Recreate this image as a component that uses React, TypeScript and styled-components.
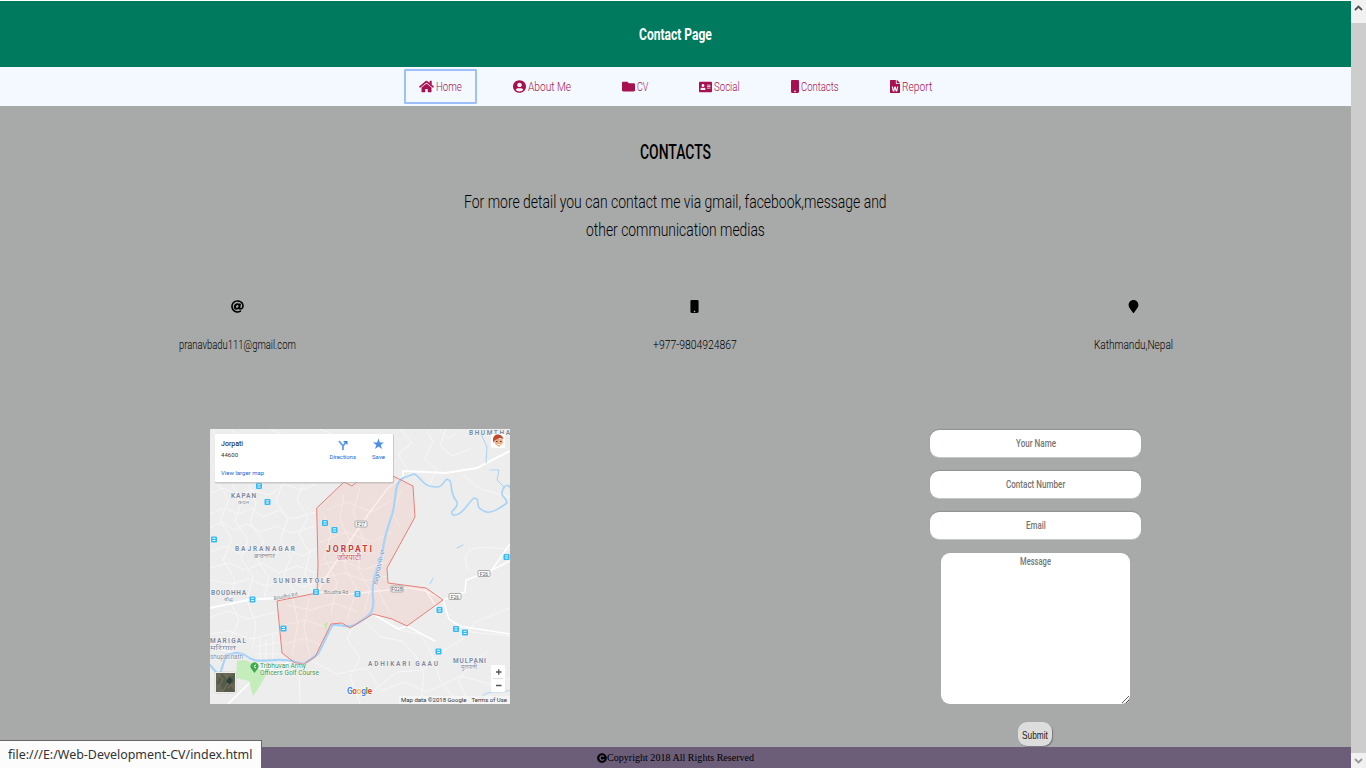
import React, { useLayoutEffect, useRef, useState } from 'react';
import styled, { createGlobalStyle } from 'styled-components';
import { FaHome, FaUserCircle, FaFolder, FaAddressCard, FaMobile, FaFileWord, FaAt, FaMapMarker, FaCopyright } from 'react-icons/fa';

const GlobalStyle = createGlobalStyle`
  * { box-sizing: border-box; }
  body { margin: 0; overflow: hidden; font-family: Roboto, "Liberation Sans", sans-serif; }
`;

const Screen = styled.div`
  display: flex;
  width: 1366px;
  height: 768px;
  overflow: hidden;
`;
const Page = styled.div`
  display: flex;
  flex-direction: column;
  width: 1351px;
  border-top: 1px solid #fff;
  background: #a8aaa9;
`;
const Header = styled.header`
  height: 66px;
  display: flex;
  align-items: center;
  justify-content: center;
  background: #007a5e;
  color: #fff;
  padding-top: 2px;
`;
const Nav = styled.nav`
  height: 39px;
  display: flex;
  align-items: center;
  justify-content: center;
  gap: 21px;
  background: #f4f8ff;
`;
const NavLink = styled.a<{ $focused?: boolean }>`
  display: flex;
  align-items: center;
  gap: 2px;
  height: 35px;
  padding: 0 15px;
  color: #a8114f;
  border-radius: 1px;
  outline: ${(p) => (p.$focused ? '2px solid #9dc0fc' : 'none')};
  outline-offset: -2px;
  svg { display: block; }
`;
const Main = styled.main`
  height: 641px;
  display: flex;
  flex-direction: column;
  align-items: center;
  color: #000;
`;
const Title = styled.h2`
  margin: 34px 0 0;
  height: 24px;
  line-height: 24px;
  font-size: 20px;
`;
const Intro = styled.div`
  display: flex;
  flex-direction: column;
  align-items: center;
  margin-top: 24px;
`;
const Details = styled.section`
  width: 100%;
  display: flex;
  justify-content: space-around;
  margin-top: 56px;
`;
const Detail = styled.div`
  display: flex;
  flex-direction: column;
  align-items: center;
  gap: 23px;
  svg { display: block; }
`;
const Lower = styled.section`
  width: 100%;
  display: flex;
  justify-content: space-around;
  margin-top: 75px;
`;
const Form = styled.form`
  width: 211px;
  padding-top: 1px;
  display: flex;
  flex-direction: column;
  align-items: center;
  gap: 14px;
`;
const Field = styled.div`
  width: 211px;
  height: 27px;
  padding-bottom: 1px;
  display: flex;
  align-items: center;
  justify-content: center;
  background: #fff;
  border-radius: 9px;
  box-shadow: 0 -1px 1px #8f9190, 0 1px 0 #c5c7c6;
  color: #757575;
`;
const MessageBox = styled.div`
  width: 189px;
  height: 151px;
  display: flex;
  justify-content: center;
  align-items: flex-start;
  background: #fff;
  border-radius: 9px;
  color: #757575;
  resize: both;
  overflow: hidden;
`;
const Submit = styled.button`
  width: 34px;
  height: 24px;
  margin: 4px 1px 0 0;
  padding: 2px 0 0;
  border: 0;
  border-radius: 9px;
  background: #ddd;
  box-shadow: 1px 1px 1px #777;
  color: #222;
  display: flex;
  align-items: center;
  justify-content: center;
`;
const Footer = styled.footer`
  height: 21px;
  display: flex;
  align-items: center;
  justify-content: center;
  background: #6c5e78;
  color: #000;
  font-family: "Liberation Serif", serif;
`;
const StatusBar = styled.div`
  position: absolute;
  left: 0;
  top: 740px;
  width: 262px;
  height: 28px;
  padding-left: 8px;
  background: #fcfcfc;
  border-top: 1px solid #666;
  border-right: 1px solid #666;
  color: #333;
  font-family: "Noto Sans", sans-serif;
`;
const Scrollbar = styled.div`
  width: 15px;
  height: 768px;
  display: flex;
  flex-direction: column;
  background: #f1f1f1;
`;
const ScrollButton = styled.div<{ $height: number; $lift?: number }>`
  height: ${(p) => p.$height}px;
  padding-bottom: ${(p) => p.$lift ?? 0}px;
  display: flex;
  align-items: center;
  justify-content: center;
`;
const Thumb = styled.div`
  flex: 1;
  background: #cdcdcd;
`;
const MapFrame = styled.svg`
  width: 300px;
  height: 275px;
  display: block;
  font-family: Roboto, "Noto Sans", sans-serif;
`;

const FitBox = styled.span<{ $width: number; $line: number }>`
  display: inline-flex;
  width: ${(p) => p.$width}px;
  height: ${(p) => p.$line}px;
  line-height: ${(p) => p.$line}px;
  text-align: left;
`;
const FitText = styled.span<{ $size: number; $weight: number }>`
  flex: none;
  white-space: nowrap;
  transform-origin: 0 50%;
  font-size: ${(p) => p.$size}px;
  font-weight: ${(p) => p.$weight};
`;

type CondensedProps = { width: number; size: number; weight?: number; line?: number; children: string };

/* Narrows the lettering so that a line fills exactly the given width. */
function Condensed({ width, size, weight = 300, line = 18, children }: CondensedProps) {
  const ref = useRef<HTMLSpanElement>(null);
  const [scale, setScale] = useState(1);
  useLayoutEffect(() => {
    if (ref.current) setScale(width / ref.current.offsetWidth);
  }, [width, size, children]);
  return (
    <FitBox $width={width} $line={line}>
      <FitText ref={ref} $size={size} $weight={weight} style={{ transform: `scaleX(${scale})` }}>{children}</FitText>
    </FitBox>
  );
}

const links = [
  { label: 'Home', width: 26, icon: FaHome, w: 15, h: 13 },
  { label: 'About Me', width: 43, icon: FaUserCircle, w: 13, h: 13 },
  { label: 'CV', width: 11, icon: FaFolder, w: 13, h: 13 },
  { label: 'Social', width: 26, icon: FaAddressCard, w: 13, h: 12 },
  { label: 'Contacts', width: 38, icon: FaMobile, w: 8, h: 13 },
  { label: 'Report', width: 30, icon: FaFileWord, w: 10, h: 13 },
];

const stops = [[259, 486], [267.5, 502], [214, 539.5], [325, 523], [334.5, 530], [316, 592], [252.5, 599.5], [283.5, 628.5], [357.5, 594], [506.5, 557], [439.5, 610], [456, 629], [465, 632.5], [438.5, 651.5]];

const boundary = 'M316.7 508L344 482L352 486L364 476H393L413 486L415 517L387 568L388 583L426 588L443 600L407 626L392 619L373 614L360 622L350 628L342 623L331 624L315 657L304 664L295 663L282 653L277 601L317 593L318 565Z';

type LabelProps = { x: number; y: number; w: number; size?: number; color?: string; weight?: number; children: string };
const Label = ({ x, y, w, size = 6.5, color = '#7c8ba1', weight = 700, children }: LabelProps) => (
  <text x={x} y={y} textLength={w} lengthAdjust={weight === 400 ? 'spacingAndGlyphs' : 'spacing'} fontSize={size} fill={color} fontWeight={weight} stroke="#fff" strokeWidth=".6" paintOrder="stroke">{children}</text>
);

function MapView() {
  return (
    <MapFrame viewBox="210 429 300 275">
      <rect x="210" y="429" width="300" height="275" fill="#eeeded" />
      <g fill="none" stroke="#f9f9f9" strokeWidth=".8">
        <path d="M210 493L224 488L237 496L251 490L270 495L284 484L301 490L316 484M210 514L224 508L239 514L252 508L263 517L279 510L292 519L316 512M210 528L222 522L233 530L247 524L261 532L277 526L291 533L316 526M210 552L226 546L240 554L257 547L271 556L286 549L302 556L317 548M210 568L229 563L246 570L262 563L279 573L297 566L317 573M210 580L232 584L249 579L267 586L285 579L303 587L317 582" />
        <path d="M218 484L229 500L220 520L232 540L223 560L235 580L230 601L239 620L230 640M233 484L241 503L235 521L248 540L241 558L253 577L247 600L256 625L252 650M249 484L256 503L250 523L263 541L257 560L269 577L264 599M282 484L276 502L288 519L280 540L291 557L284 575L296 595M303 484L297 500L308 517L299 535L310 553L305 574L313 592" />
        <path d="M210 617L229 611L247 619L277 612M210 634L229 631L251 639L279 632M255 647L280 642M257 654H279M260 636V662M266 640V662M273 633V660M210 648L232 652L251 666L276 671L299 666M299 666L300 704M312 661L337 674L366 668L382 691L404 682L427 692L461 676L490 684L510 678M365 622L381 637L402 641L416 656L424 674L421 704M354 625L347 639L360 658L350 677L360 704M389 620L400 630L420 634L431 652L440 680L459 704M374 690L397 672L424 670L444 650L463 639L475 622L510 608M451 620L471 632L510 636M490 650L469 665L459 681L469 704" />
        <path d="M400 429L412 443L398 454L409 472M426 429L433 442L424 459L437 469L429 485M446 429L440 445L452 456L470 449M463 475L480 489L510 497M468 570C458 545 480 545 510 550M440 429L448 439L460 430M214 429V435M230 429L236 434M270 429L281 434M320 429L332 434" />
      </g>
      <g fill="none" stroke="#fff">
        <path strokeWidth="2" d="M403 476V471L445 473L477 468L510 451M210 608L248 600L277 598" />
        <path strokeWidth="1.5" d="M403 476L387 489L370 512L354 535L330 571L317 592L350 594L388 590L410 588L426 591L443 600L465 592L466 580L490 571L510 561M443 600L449 619L459 626L510 634M425 589L437 608M489 574L510 544M373 614L398 629L407 626L435 641M228 704L262 671L293 661" />
      </g>
      <path d={boundary} fill="#f6a99b" fillOpacity=".2" />
      <g fill="none" stroke="#f7eeeb" strokeWidth=".7">
        <path d="M327 510L347 502L372 512L392 500M320 542L347 532L371 542L392 532M320 565L341 560L364 570L385 562M320 578L345 573L365 581L387 576M287 605L311 610L334 603L358 612M280 626L306 620L329 628M285 644L304 638L320 645M324 515L331 534L324 558L337 582L331 614M344 494L340 520L351 543L344 566L357 589L347 619M360 488L353 512L364 541L358 568L370 590L364 612M293 598L298 624L292 655M309 598L304 627L310 657M374 581L384 602L391 614M401 490L393 513L400 527" />
      </g>
      <g fill="none" stroke="#a7d3f8" strokeLinecap="round" strokeLinejoin="round">
        <path strokeWidth="2.2" d="M403 478C393 484 397 500 392 515S384 538 382 556C377 570 371 580 373 598C375 614 367 617 359 622C350 630 343 624 333 625C328 631 325 642 318 654L304 664L292 661C273 657 257 665 248 657C239 650 233 654 226 655L221 671M210 665L216 672" />
        <path strokeWidth="1.6" d="M403 478L414 474C421 476 421 487 437 487C445 487 444 475 450 481C453 487 449 492 457 502C459 510 448 510 453 515C462 516 466 505 474 498C482 499 473 507 484 511C490 515 500 508 507 503C506 495 498 498 504 487C507 484 510 486 510 488" />
        <path strokeWidth="1" d="M490 470L499 470L497 480L505 488M481 434L487 447L486 463M457 548L463 545M430 584L433 578M480 700C485 687 502 695 510 690" />
      </g>
      <path d="M237 661C246 658 253 663 258 669L268 672L258 689L253 696L249 681L236 678Z" fill="#c5edbc" />
      <path d="M324 624L328 622L326 631M237 449L240 447" fill="#c5e7ac" />
      <path d={boundary} fill="none" stroke="#e58079" />
      <g fontSize="5">
        {[[361, 524, 'F27'], [397, 589, 'F028'], [484, 573.5, 'F26'], [455, 596.5, 'F26']].map(([x, y, t]) => (
          <g key={`${x}-${y}`}>
            <rect x={Number(x) - 6} y={Number(y) - 3} width="12" height="6" rx="1" fill="#fff" stroke="#aaa" />
            <text x={x} y={Number(y) + 2} textAnchor="middle" fill="#555">{t}</text>
          </g>
        ))}
      </g>
      {stops.map(([x, y]) => (
        <g key={`${x}-${y}`}>
          <rect x={x - 3} y={y - 3} width="6" height="6" rx="1" fill="#35baf4" />
          <path d={`M${x - 1.5} ${y - 1.2}h3M${x - 1.5} ${y + 1}h3`} stroke="#e7f9ff" strokeWidth="1" />
        </g>
      ))}
      <Label x={231} y={498} w={25}>KAPAN</Label>
      <Label x={238} y={504} w={11} size={5} weight={400}>कपन</Label>
      <Label x={235} y={551} w={60}>BAJRANAGAR</Label>
      <Label x={254} y={558} w={21} size={6} weight={400}>बज्रनगर</Label>
      <Label x={326} y={551.5} w={46} size={8.5} color="#c23d3b">JORPATI</Label>
      <Label x={337} y={560} w={24} size={8} color="#cf5752" weight={400}>जोरपाटी</Label>
      <Label x={273} y={583} w={57}>SUNDERTOLE</Label>
      <Label x={211} y={595} w={35}>BOUDHHA</Label>
      <Label x={224} y={601} w={9} size={5} weight={400}>बौद्ध</Label>
      <Label x={210} y={643} w={36}>MARIGAL</Label>
      <Label x={210} y={650} w={26} size={6} weight={400}>मरिगाल</Label>
      <Label x={210} y={659} w={33} size={6.5} weight={400}>shupatinath</Label>
      <Label x={368} y={666} w={70}>ADHIKARI GAAU</Label>
      <Label x={453} y={663} w={33}>MULPANI</Label>
      <Label x={461} y={669} w={16} size={6} weight={400}>मुलपानी</Label>
      <Label x={469} y={435} w={41}>BHUMTHA</Label>
      <g transform="rotate(-10 275 600)"><Label x={274} y={600} w={24} size={5.5} color="#777" weight={400}>Boudha Rd</Label></g>
      <Label x={324} y={594} w={24} size={5.5} color="#777" weight={400}>Boudha Rd</Label>
      <g transform="rotate(-78 377 585)"><Label x={377} y={585} w={36} size={6.5} color="#6186bd" weight={400}>Bagmati River</Label></g>
      <Label x={260} y={668} w={46} size={6.5} color="#399348" weight={400}>Tribhuvan Army</Label>
      <Label x={260} y={674.5} w={59} size={6.5} color="#399348" weight={400}>Officers Golf Course</Label>
      <path d="M254.5 673L251.5 669A4 4 0 1 1 257.5 669Z" fill="#42a950" />
      <path d="M256 665a1.5 1.5 0 1 0 0 3" fill="none" stroke="#fff" />

      <rect x="215" y="434.5" width="179" height="49" rx="1" fill="#aaa" opacity=".55" />
      <rect x="215" y="434" width="178" height="48" rx="1" fill="#fff" />
      <text x="221" y="446" textLength="22" fontSize="7" fill="#000">Jorpati</text>
      <text x="221" y="457.3" textLength="17" fontSize="6" fill="#333">44600</text>
      <text x="221" y="475.3" textLength="43" fontSize="6" fill="#1769d8">View larger map</text>
      <path d="M339 441L343 446V450M343 446L346 442" fill="none" stroke="#639ee8" strokeWidth="1.8" />
      <path d="M343 441H347.5V445Z" fill="#4285e8" />
      <text x="329.5" y="459" textLength="26.5" fontSize="6" fill="#1769d8">Directions</text>
      <path d="M378.5 438.5L379.9 442.6H384L380.7 445.1L382 449L378.5 446.5L375 449L376.3 445.1L373 442.6H377.1Z" fill="#4d8ee8" />
      <text x="372" y="459" textLength="13" fontSize="6" fill="#1769d8">Save</text>

      <rect x="491" y="434" width="14" height="14" rx="1" fill="#fff" />
      <path d="M494 439H502.5L503 443L499 447L495 444Z" fill="#eab18b" />
      <path d="M493 440C493 433 502 433 503.5 439L500 438L495 440L493.5 443Z" fill="#bd4a2e" />
      <path d="M496 441.5H497.5M500 441.5H501.5" stroke="#593724" />
      <path d="M497.5 444.5H500.5" stroke="#fff" strokeWidth=".8" />

      <rect x="491" y="665" width="14" height="27" rx="1" fill="#fff" />
      <path d="M493 678.5H503" stroke="#e0e0e0" />
      <path d="M496 672H501.5M498.75 669.2V674.8M496 685.5H501.5" stroke="#555" strokeWidth="1.3" />

      <rect x="215" y="672" width="21" height="21" rx="1" fill="#fff" stroke="#bbb" strokeWidth=".5" />
      <rect x="216" y="673" width="19" height="19" fill="#686756" />
      <path d="M216 683L222 674L227 678L235 673V681L231 686L235 692H224L221 686Z" fill="#555b4b" />
      <path d="M218 675L223 679L220 685L217 688M225 674L229 681L223 691M232 684L228 688" fill="none" stroke="#7c745f" />
      <path d="M229 677L233 680L230 684L226 682Z" fill="#293e38" />

      <text x="347" y="694" textLength="25" fontSize="8.5" fontWeight="700" stroke="#fff" strokeWidth=".8" paintOrder="stroke">
        <tspan fill="#4285f4">G</tspan><tspan fill="#ea4335">o</tspan><tspan fill="#fbbc05">o</tspan><tspan fill="#4285f4">g</tspan><tspan fill="#34a853">l</tspan><tspan fill="#ea4335">e</tspan>
      </text>
      <rect x="399" y="696" width="111" height="8" fill="#f5f5f5" opacity=".75" />
      <text x="401" y="702.2" textLength="65.5" fontSize="6" fill="#333">Map data ©2018 Google</text>
      <text x="471.5" y="702.2" textLength="35.5" fontSize="6" fill="#333">Terms of Use</text>
    </MapFrame>
  );
}

export default function App() {
  return (
    <Screen>
      <GlobalStyle />
      <Page>
        <Header><Condensed width={73} size={16.5} weight={700} line={22}>Contact Page</Condensed></Header>
        <Nav>
          {links.map(({ label, width, icon: Icon, w, h }, i) => (
            <NavLink key={label} $focused={i === 0}>
              <Icon style={{ width: w, height: h }} preserveAspectRatio="none" />
              <Condensed width={width} size={13}>{label}</Condensed>
            </NavLink>
          ))}
        </Nav>
        <Main>
          <Title><Condensed width={71} size={20} weight={500} line={24}>CONTACTS</Condensed></Title>
          <Intro>
            <Condensed width={423} size={18} line={28}>For more detail you can contact me via gmail, facebook,message and</Condensed>
            <Condensed width={179} size={18} line={28}>other communication medias</Condensed>
          </Intro>
          <Details>
            <Detail><FaAt size={13} /><Condensed width={117} size={13}>pranavbadu111@gmail.com</Condensed></Detail>
            <Detail><FaMobile size={13} /><Condensed width={84} size={13}>+977-9804924867</Condensed></Detail>
            <Detail><FaMapMarker size={13} /><Condensed width={79} size={13}>Kathmandu,Nepal</Condensed></Detail>
          </Details>
          <Lower>
            <MapView />
            <Form>
              <Field><Condensed width={40} size={11.5} weight={500}>Your Name</Condensed></Field>
              <Field><Condensed width={59} size={11.5} weight={500}>Contact Number</Condensed></Field>
              <Field><Condensed width={20} size={11.5} weight={500}>Email</Condensed></Field>
              <MessageBox><Condensed width={31} size={11.5} weight={500} line={16}>Message</Condensed></MessageBox>
              <Submit type="button"><Condensed width={26} size={11.5} weight={400}>Submit</Condensed></Submit>
            </Form>
          </Lower>
        </Main>
        <Footer><FaCopyright size={10} /><Condensed width={147} size={10} weight={400}>Copyright 2018 All Rights Reserved</Condensed></Footer>
      </Page>
      <Scrollbar>
        <ScrollButton $height={23} $lift={8}><svg width="9" height="6"><path d="M1 5L4.5 1.5L8 5" fill="none" stroke="#505050" strokeWidth="1.8" /></svg></ScrollButton>
        <Thumb />
        <ScrollButton $height={15}><svg width="9" height="6"><path d="M1 1L4.5 4.5L8 1" fill="none" stroke="#999" strokeWidth="1.8" /></svg></ScrollButton>
      </Scrollbar>
      <StatusBar><Condensed width={244} size={13} weight={400} line={26}>file:///E:/Web-Development-CV/index.html</Condensed></StatusBar>
    </Screen>
  );
}
